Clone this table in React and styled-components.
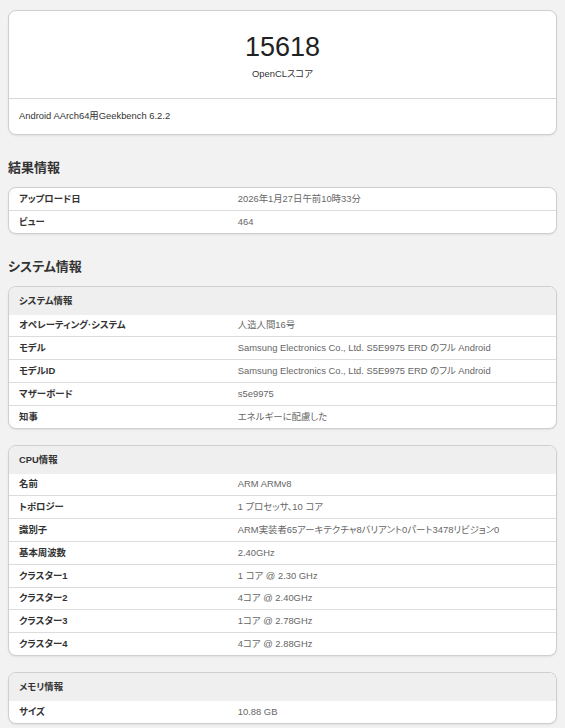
import styled, { createGlobalStyle } from "styled-components";

const GlobalStyle = createGlobalStyle`
	html, body {
		margin: 0;
		padding: 0;
		background: #f2f2f2;
	}
	body {
		font-family: "Liberation Sans", Arial, "Noto Sans CJK JP", sans-serif;
		font-feature-settings: "palt";
		color: #333;
		font-size: 9.4px;
	}
`;

const Page = styled.main`
	padding: 10px 8px 8px;
`;

const Card = styled.section`
	background: #fff;
	border: 1px solid #cfcfcf;
	border-radius: 8px;
	box-shadow: 0 1px 2px rgba(0, 0, 0, 0.08);
	overflow: hidden;
	margin-bottom: ${(p) => p.$gap || 16}px;
`;

const ScoreBlock = styled.div`
	display: flex;
	flex-direction: column;
	align-items: center;
	padding: 20px 0 18px;
	border-bottom: 1px solid #d6d6d6;
`;

const Score = styled.div`
	font-size: 27px;
	line-height: 32px;
	color: #222;
`;

const ScoreLabel = styled.div`
	margin-top: 5px;
	line-height: 12px;
	color: #333;
`;

const CardFooter = styled.div`
	padding: 11px 10px 12px;
	line-height: 12px;
	color: #333;
`;

const Heading = styled.h2`
	margin: 0;
	padding: 0 0 11px;
	font-size: 13px;
	line-height: 16px;
	font-weight: bold;
	color: #333;
`;

const Table = styled.table`
	width: 100%;
	border-collapse: collapse;
`;

const HeadCell = styled.th`
	background: #efefef;
	text-align: left;
	font-weight: bold;
	color: #333;
	height: 28px;
	padding: 0 10px;
	line-height: 12px;
`;

const Row = styled.tr`
	& + & td {
		border-top: 1px solid #dcdcdc;
	}
`;

const Label = styled.td`
	width: 40%;
	height: 21.8px;
	padding: 0 10px;
	line-height: 12px;
	font-weight: bold;
	color: #333;
	white-space: nowrap;
`;

const Value = styled.td`
	height: 21.8px;
	padding: 0 10px;
	line-height: 12px;
	color: #666;
	white-space: nowrap;
`;

const InfoTable = ({ title, rows }) => (
	<Table>
		{title ? (
			<thead>
				<tr>
					<HeadCell colSpan={2}>{title}</HeadCell>
				</tr>
			</thead>
		) : null}
		<tbody>
			{rows.map(([k, v]) => (
				<Row key={k}>
					<Label>{k}</Label>
					<Value>{v}</Value>
				</Row>
			))}
		</tbody>
	</Table>
);

const resultRows = [
	["アップロード日", "2026年1月27日午前10時33分"],
	["ビュー", "464"],
];

const systemRows = [
	["オペレーティング·システム", "人造人間16号"],
	["モデル", "Samsung Electronics Co., Ltd. S5E9975 ERD のフル Android"],
	["モデルID", "Samsung Electronics Co., Ltd. S5E9975 ERD のフル Android"],
	["マザーボード", "s5e9975"],
	["知事", "エネルギーに配慮した"],
];

const cpuRows = [
	["名前", "ARM ARMv8"],
	["トポロジー", "1 プロセッサ、10 コア"],
	["識別子", "ARM実装者65アーキテクチャ8バリアント0パート3478リビジョン0"],
	["基本周波数", "2.40GHz"],
	["クラスター1", "1 コア @ 2.30 GHz"],
	["クラスター2", "4コア @ 2.40GHz"],
	["クラスター3", "1コア @ 2.78GHz"],
	["クラスター4", "4コア @ 2.88GHz"],
];

const memoryRows = [["サイズ", "10.88 GB"]];

export default function App() {
	return (
		<>
			<GlobalStyle />
			<Page>
				<Card $gap={25}>
					<ScoreBlock>
						<Score>15618</Score>
						<ScoreLabel>OpenCLスコア</ScoreLabel>
					</ScoreBlock>
					<CardFooter>Android AArch64用Geekbench 6.2.2</CardFooter>
				</Card>

				<Heading>結果情報</Heading>
				<Card $gap={25}>
					<InfoTable rows={resultRows} />
				</Card>

				<Heading>システム情報</Heading>
				<Card>
					<InfoTable title="システム情報" rows={systemRows} />
				</Card>
				<Card>
					<InfoTable title="CPU情報" rows={cpuRows} />
				</Card>
				<Card>
					<InfoTable title="メモリ情報" rows={memoryRows} />
				</Card>
			</Page>
		</>
	);
}
